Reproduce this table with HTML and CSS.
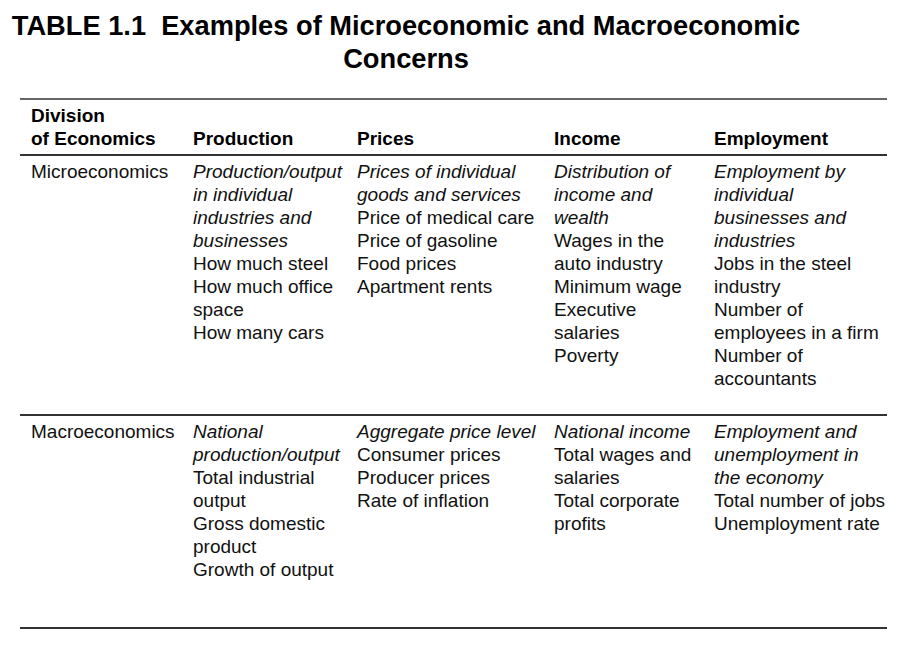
FILE: index.html
```html
<!DOCTYPE html>
<html lang="en">
<head>
<meta charset="utf-8">
<title>Table 1.1</title>
<link rel="stylesheet" href="styles.css">
</head>
<body>
<h1 class="title">TABLE 1.1&nbsp; Examples of Microeconomic and Macroeconomic<br>Concerns</h1>
<div class="table">
  <div class="row head">
    <div class="cell">Division<br>of Economics</div>
    <div class="cell">Production</div>
    <div class="cell">Prices</div>
    <div class="cell">Income</div>
    <div class="cell">Employment</div>
  </div>
  <div class="row micro">
    <div class="cell">Microeconomics</div>
    <div class="cell"><em>Production/output<br>in individual<br>industries and<br>businesses</em><br>How much steel<br>How much office<br>space<br>How many cars</div>
    <div class="cell"><em>Prices of individual<br>goods and services</em><br>Price of medical care<br>Price of gasoline<br>Food prices<br>Apartment rents</div>
    <div class="cell"><em>Distribution of<br>income and<br>wealth</em><br>Wages in the<br>auto industry<br>Minimum wage<br>Executive<br>salaries<br>Poverty</div>
    <div class="cell"><em>Employment by<br>individual<br>businesses and<br>industries</em><br>Jobs in the steel<br>industry<br>Number of<br>employees in a firm<br>Number of<br>accountants</div>
  </div>
  <div class="row macro">
    <div class="cell">Macroeconomics</div>
    <div class="cell"><em>National<br>production/output</em><br>Total industrial<br>output<br>Gross domestic<br>product<br>Growth of output</div>
    <div class="cell"><em>Aggregate price level</em><br>Consumer prices<br>Producer prices<br>Rate of inflation</div>
    <div class="cell"><em>National income</em><br>Total wages and<br>salaries<br>Total corporate<br>profits</div>
    <div class="cell"><em>Employment and<br>unemployment in<br>the economy</em><br>Total number of jobs<br>Unemployment rate</div>
  </div>
</div>
</body>
</html>
```

FILE: styles.css
```css
html, body {
  margin: 0;
  padding: 0;
  background: #ffffff;
}

body {
  font-family: "Liberation Sans", Arial, sans-serif;
  color: #111111;
}

.title {
  margin: 0;
  padding-top: 9px;
  margin-left: 8px;
  width: 796px;
  text-align: center;
  font-size: 27.25px;
  line-height: 33px;
  font-weight: bold;
  color: #000000;
  white-space: nowrap;
}

.table {
  margin-top: 23px;
  margin-left: 20px;
  width: 867px;
  font-size: 19px;
  line-height: 23px;
}

.row {
  display: grid;
  grid-template-columns: 162px 164px 197px 160px 1fr;
  padding-left: 11px;
}

.cell {
  white-space: nowrap;
}

.cell em {
  font-style: italic;
}

.head {
  border-top: 2px solid #666666;
  border-bottom: 2px solid #333333;
  padding-top: 4px;
  padding-bottom: 4px;
  font-weight: bold;
  color: #000000;
  align-items: end;
}

.micro {
  padding-top: 4px;
  padding-bottom: 24px;
  border-bottom: 2px solid #333333;
}

.macro {
  padding-top: 4px;
  padding-bottom: 46px;
  border-bottom: 2px solid #333333;
}
```
